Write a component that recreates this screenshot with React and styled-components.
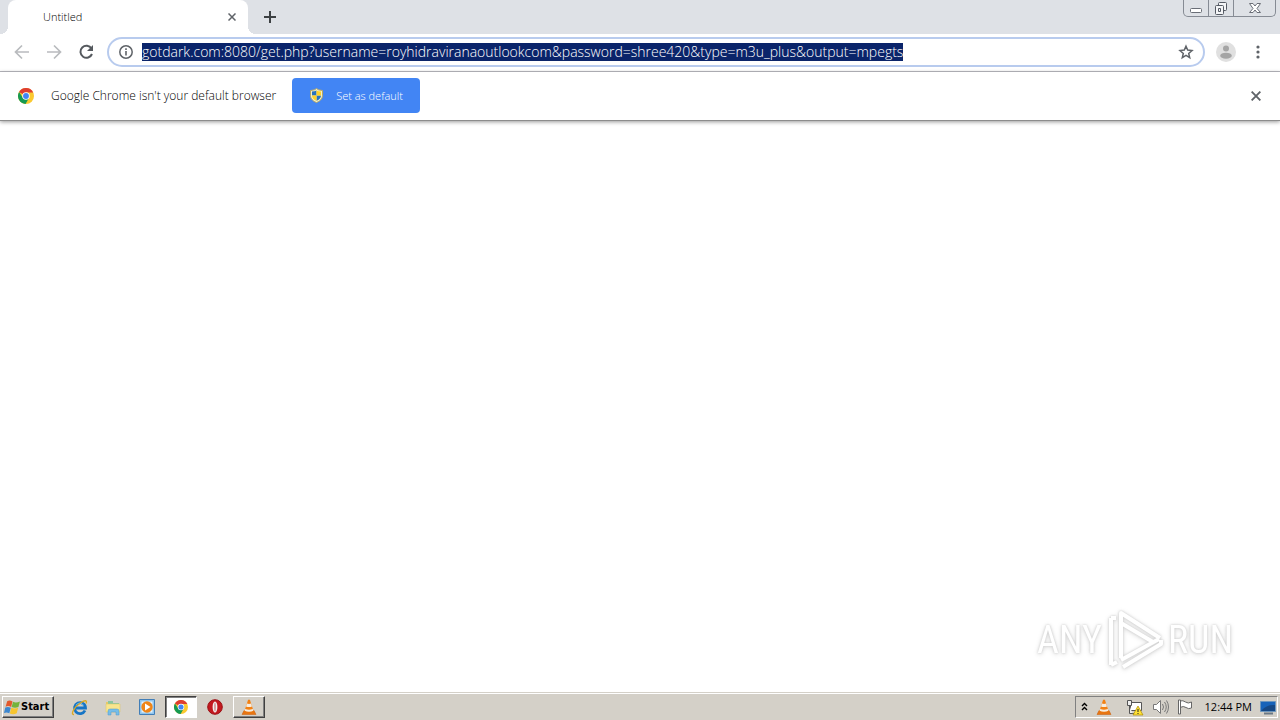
import React from "react";
import styled, { createGlobalStyle } from "styled-components";

const Global = createGlobalStyle`
  * { box-sizing: border-box; }
  body { margin: 0; font-family: "Open Sans", "Noto Sans", sans-serif; color: #222; background: #fff; }
  button { border: 0; padding: 0; background: none; font: inherit; color: inherit; }
  svg { display: block; flex: none; }
`;

const Desktop = styled.div`
  display: flex;
  flex-direction: column;
  min-height: 100vh;
`;

const TabStrip = styled.header`
  display: flex;
  align-items: flex-start;
  height: 34px;
  padding-left: 8px;
  background: #dee1e6;
`;

const Tab = styled.div`
  position: relative;
  display: flex;
  align-items: center;
  justify-content: space-between;
  width: 240px;
  height: 34px;
  padding: 0 10px 0 35px;
  border-radius: 8px 8px 0 0;
  background: #fff;
  font-size: 11px;
  line-height: 16px;
  font-weight: 300;
  color: #000;
  &::before, &::after {
    content: "";
    position: absolute;
    bottom: 0;
    width: 8px;
    height: 8px;
  }
  &::before { left: -8px; background: radial-gradient(circle at 0 0, #dee1e6 8px, #fff 8px); }
  &::after { right: -8px; background: radial-gradient(circle at 100% 0, #dee1e6 8px, #fff 8px); }
`;

const IconButton = styled.button`
  display: flex;
  align-items: center;
  justify-content: center;
  flex: none;
  width: ${(p) => p.$w || 32}px;
  height: ${(p) => p.$h || 32}px;
`;

const NewTab = styled(IconButton)`
  margin-left: 8px;
`;

const WindowControls = styled.div`
  display: flex;
  height: 17px;
  margin: 0 4px 0 auto;
  border: 1px solid #868b94;
  border-top: 0;
  border-radius: 0 0 5px 5px;
  button + button { border-left: 1px solid #868b94; }
`;

const Toolbar = styled.nav`
  display: flex;
  align-items: center;
  height: 38px;
  padding: 0 6px 2px;
  border-bottom: 1px solid #b1b1b9;
  background: #fff;
`;

const AddressBar = styled.div`
  display: flex;
  align-items: center;
  flex: 1;
  min-width: 0;
  height: 30px;
  margin: 0 5px;
  padding: 0 1px 0 10px;
  border: 2px solid #b8cbee;
  border-radius: 15px;
`;

const Address = styled.input`
  field-sizing: content;
  min-width: 0;
  height: 18px;
  margin: 0 auto 0 9px;
  padding: 0;
  border: 0;
  outline: 0;
  background: #0a246a;
  color: #fff;
  font: 300 14px/18px "Open Sans", "Noto Sans", sans-serif;
`;

const InfoBar = styled.section`
  position: relative;
  display: flex;
  align-items: center;
  height: 49px;
  padding: 0 8px 0 18px;
  border-bottom: 1px solid #8c8c8c;
  background: #fff;
  box-shadow: 0 1px 4px #999;
`;

const Message = styled.span`
  margin: 0 16px 0 17px;
  font-size: 12px;
  font-weight: 300;
  line-height: 16px;
  color: #000;
`;

const DefaultButton = styled.button`
  display: flex;
  align-items: center;
  gap: 12px;
  height: 35px;
  margin-bottom: 1px;
  padding: 0 17px;
  border-radius: 4px;
  background: #4285f4;
  color: #fff;
  font-size: 11px;
  font-weight: 300;
  line-height: 16px;
`;

const Dismiss = styled(IconButton)`
  margin-left: auto;
`;

const Page = styled.main`
  display: flex;
  flex: 1;
  align-items: flex-end;
  justify-content: flex-end;
  padding: 0 47px 22px 0;
`;

const Watermark = styled.div`
  display: flex;
  align-items: center;
  gap: 5px;
  color: #fff;
  font: 38px/60px "Roboto Condensed", "Open Sans Condensed", "Liberation Sans Narrow", sans-serif;
  filter: drop-shadow(0 0 1px #ccc) drop-shadow(0 1px 2px #ddd);
`;

const Taskbar = styled.footer`
  display: flex;
  align-items: center;
  height: 28px;
  padding: 1px 2px 0;
  border-top: 1px solid #d4d0c8;
  background: #d4d0c8;
  box-shadow: inset 0 1px #fff;
  font: 11px/16px "Open Sans", "Noto Sans", sans-serif;
  color: #000;
`;

const StartButton = styled.button`
  display: flex;
  align-items: center;
  height: 22px;
  width: 52px;
  padding-left: 1px;
  margin-right: 9px;
  border: 1px solid;
  border-color: #fff #404040 #404040 #fff;
  box-shadow: inset -1px -1px #808080;
  font: bold 11px/16px "DejaVu Sans Condensed", "Open Sans", sans-serif;
`;

const TaskButton = styled.button`
  display: flex;
  align-items: center;
  justify-content: center;
  width: 32px;
  height: 22px;
  margin-right: 2px;
  border: 1px solid transparent;
  ${(p) => p.$state === "pressed" && "background: #fff; border-color: #404040 #fff #fff #404040; box-shadow: inset 1px 1px #808080;"}
  ${(p) => p.$state === "raised" && "border-color: #fff #404040 #404040 #fff; box-shadow: inset -1px -1px #808080;"}
`;

const Tray = styled.div`
  display: flex;
  align-items: center;
  gap: 8px;
  height: 22px;
  margin-left: auto;
  padding: 0 0 0 5px;
  border: 1px solid;
  border-color: #808080 #fff #fff #808080;
`;

const Clock = styled.time`
  margin: 0 0 0 4px;
`;

const Cross = ({ size = 8 }) => (
  <svg width={size} height={size} viewBox="0 0 8 8"><path d="M.5.5l7 7M7.5.5l-7 7" stroke="#5f6368" strokeWidth="1.5" /></svg>
);

const Arrow = ({ flip }) => (
  <svg width="16" height="16" viewBox="0 0 16 16" fill="none" stroke="#b9bbbe" strokeWidth="1.700">
    <path d={flip ? "M1 8h13M8 1.5L14.5 8 8 14.5" : "M15 8H2M8 1.5L1.5 8 8 14.5"} />
  </svg>
);

const Chrome = ({ size = 18 }) => (
  <svg width={size} height={size} viewBox="0 0 18 18">
    <circle cx="9" cy="9" r="9" fill="#fbc92f" />
    <path d="M9 9L1.2 4.5A9 9 0 0 1 16.8 4.5L17 5H9z" fill="#df3e30" />
    <path d="M1.2 4.5A9 9 0 0 0 8.5 18L12.5 11 9 9 5.5 11z" fill="#159a52" />
    <circle cx="9" cy="9" r="4.2" fill="#fff" />
    <circle cx="9" cy="9" r="3.3" fill="#4285f4" />
  </svg>
);

const Shield = () => (
  <svg width="15" height="15" viewBox="0 0 15 15">
    <path d="M7.5.5l2 1.3 4 .7v5c0 3.500-2.800 5.800-6 7-3.200-1.200-6-3.500-6-7v-5l4-.7z" fill="#f3efc8" stroke="#b5a763" />
    <path d="M7.500 2.500v5H3v-4l2.500-.3zM7.500 7.500H12c0 2.500-2 4.300-4.500 5.300z" fill="#2673bf" />
    <path d="M7.500 2.500v5H12v-4l-2.500-.3zM7.500 7.500H3c0 2.500 2 4.300 4.500 5.300z" fill="#ffd229" />
  </svg>
);

const Cone = () => (
  <svg width="16" height="17" viewBox="0 0 16 17">
    <path d="M3 11.500h10l2 4H1z" fill="#e87511" stroke="#c85c0b" strokeWidth=".5" />
    <path d="M7 1q1-.8 2 0l3.500 11q-4.500 2-9 0z" fill="#f28114" />
    <path d="M6 4.500q2 .8 4 0l1 3q-3 1.200-6 0zM4.200 10q3.800 1.500 7.600 0l.6 1.800q-4.400 1.700-8.800 0z" fill="#f6ede1" />
  </svg>
);

const WindowsFlag = () => (
  <svg width="17" height="17" viewBox="0 0 16 16">
    <path d="M3 2q2.500-1.200 5 .3L6.700 7.500Q4 6 1.500 7.300z" fill="#e2592c" />
    <path d="M8.500 2.600q2.700 1.300 6.500-.3L13.600 7.500q-3 1.400-6.400.1z" fill="#74b33b" />
    <path d="M1.200 8q2.500-1.200 5.200.2L5 13.500Q2.500 12 0 13.200z" fill="#3c87cf" />
    <path d="M6.900 8.200q3.200 1.400 6.400 0L12 13.500q-3.200 1.500-6.500.2z" fill="#f6c52e" />
  </svg>
);

const Explorer = () => (
  <svg width="17" height="17" viewBox="0 0 17 17" fill="none">
    <path d="M14 11.500a5.500 5.500 0 1 1 .5-2.500H5" stroke="#1775c5" strokeWidth="2.800" />
    <path d="M12.500 6.500A4.200 4.200 0 0 0 5 6.200" stroke="#66baf0" />
    <path d="M3 15.500C-1 16 3 8 10 3.500 14 1 16.500 1 15 4.500" stroke="#dda921" strokeWidth="1.300" />
  </svg>
);

const Folder = () => (
  <svg width="17" height="17" viewBox="0 0 17 17">
    <path d="M1 3h5l1 1h7v9H1z" fill="#e6c968" />
    <path d="M3 2h5v2h6v3H3z" fill="#8bc6a0" />
    <path d="M1 5h14v8H1z" fill="#f8e58e" stroke="#ddc565" strokeWidth=".5" />
    <path d="M3 16v-4q0-2 2-2h7q2 0 2 2v4h-3v-3H6v3z" fill="#76bde8" stroke="#4f9acc" strokeWidth=".5" />
  </svg>
);

const Player = () => (
  <svg width="16" height="16" viewBox="0 0 16 16">
    <path d="M.5.5h15v15H.5z" fill="#8fc5ee" stroke="#427eb7" />
    <path d="M2.500 2.500h11v11h-11z" fill="#e5f2fc" />
    <circle cx="8" cy="8" r="5.700" fill="#ef8518" /><path d="M6 4.500L11.500 8 6 11.500z" fill="#fff" />
  </svg>
);

const Opera = () => (
  <svg width="16" height="16" viewBox="0 0 16 16">
    <circle cx="8" cy="8" r="7.300" fill="#c3191f" stroke="#9b1015" />
    <ellipse cx="8" cy="8" rx="2.400" ry="5.500" fill="#f3f0ee" /><ellipse cx="8" cy="8" rx=".7" ry="4.500" fill="#c98080" />
  </svg>
);

const Play = () => (
  <svg width="56" height="60" viewBox="0 0 56 60" fill="none" stroke="#fff" strokeWidth="4" strokeLinejoin="round">
    <path d="M4 8v47M4 8h5M4 55l6-3" />
    <path d="M14 48V3l39 25" />
    <path d="M14 13l32 19M14 50l38-21M16 57l38-23v-4" />
  </svg>
);

export default function App() {
  return (
    <Desktop>
      <Global />
      <TabStrip>
        <Tab>
          <span>Untitled</span>
          <IconButton $w={12} $h={16} aria-label="Close tab"><Cross /></IconButton>
        </Tab>
        <NewTab $w={28} $h={34} aria-label="New tab">
          <svg width="12" height="12" viewBox="0 0 12 12"><path d="M6 0v12M0 6h12" stroke="#3c4043" strokeWidth="2" /></svg>
        </NewTab>
        <WindowControls>
          <IconButton $w={24} $h={16} aria-label="Minimize">
            <svg width="12" height="16" viewBox="0 0 12 16"><rect x=".5" y="8.500" width="11" height="4" rx="1" fill="#fff" stroke="#6a6e77" /></svg>
          </IconButton>
          <IconButton $w={25} $h={16} aria-label="Restore">
            <svg width="14" height="16" viewBox="0 0 14 16" fill="#f4f5f7" stroke="#555a64">
              <rect x="4.500" y="2.500" width="8" height="8" rx="1" /><rect x="1.500" y="5.500" width="8" height="9" rx="1" /><path d="M4.500 8.500h2v3h-2z" />
            </svg>
          </IconButton>
          <IconButton $w={42} $h={16} aria-label="Close window">
            <svg width="12" height="16" viewBox="0 0 12 16" fill="#fff" stroke="#6a6e77"><path d="M.5 3.500h3.500l2 2.500 2-2.500h3.500L8 8.500l3.500 4H8L6 10l-2 2.500H.5l3.500-4z" /></svg>
          </IconButton>
        </WindowControls>
      </TabStrip>
      <Toolbar>
        <IconButton aria-label="Back"><Arrow /></IconButton>
        <IconButton aria-label="Forward"><Arrow flip /></IconButton>
        <IconButton aria-label="Reload">
          <svg width="16" height="16" viewBox="0 0 16 16" fill="none" stroke="#55595e" strokeWidth="2">
            <path d="M13.500 4.500A6 6 0 1 0 14 10" /><path d="M15 1v6H9z" fill="#55595e" stroke="none" />
          </svg>
        </IconButton>
        <AddressBar>
          <svg width="14" height="14" viewBox="0 0 14 14"><circle cx="7" cy="7" r="6.200" fill="none" stroke="#5f6368" strokeWidth="1.500" /><path d="M7 6v4.500M7 3.300V5" stroke="#5f6368" strokeWidth="1.600" /></svg>
          <Address aria-label="Address" spellCheck="false" defaultValue="gotdark.com:8080/get.php?username=royhidraviranaoutlookcom&password=shree420&type=m3u_plus&output=mpegts" />
          <IconButton aria-label="Bookmark">
            <svg width="16" height="16" viewBox="0 0 16 16" fill="none" stroke="#5f6368" strokeWidth="1.500"><path d="M8 2.200l1.700 3.900 4.300.4-3.300 2.900 1 4.200L8 11.400l-3.700 2.200 1-4.200L2 6.500l4.300-.4z" /></svg>
          </IconButton>
        </AddressBar>
        <IconButton aria-label="Profile">
          <svg width="20" height="20" viewBox="0 0 20 20"><circle cx="10" cy="10" r="10" fill="#e0e0e0" /><circle cx="10" cy="6.500" r="3" fill="#a5a5a5" /><ellipse cx="10" cy="13.700" rx="5.800" ry="3" fill="#a5a5a5" /></svg>
        </IconButton>
        <IconButton aria-label="Menu">
          <svg width="4" height="14" viewBox="0 0 4 14" fill="#5f6368"><circle cx="2" cy="2" r="1.600" /><circle cx="2" cy="7" r="1.600" /><circle cx="2" cy="12" r="1.600" /></svg>
        </IconButton>
      </Toolbar>
      <InfoBar>
        <Chrome size={16} />
        <Message>Google Chrome isn't your default browser</Message>
        <DefaultButton><Shield />Set as default</DefaultButton>
        <Dismiss aria-label="Dismiss"><Cross size={10} /></Dismiss>
      </InfoBar>
      <Page>
        <Watermark><span>ANY</span><Play /><span>RUN</span></Watermark>
      </Page>
      <Taskbar>
        <StartButton><WindowsFlag />Start</StartButton>
        <TaskButton aria-label="Internet Explorer"><Explorer /></TaskButton>
        <TaskButton aria-label="File Explorer"><Folder /></TaskButton>
        <TaskButton aria-label="Media Player"><Player /></TaskButton>
        <TaskButton $state="pressed" aria-label="Chrome"><Chrome size={14} /></TaskButton>
        <TaskButton aria-label="Opera"><Opera /></TaskButton>
        <TaskButton $state="raised" aria-label="VLC"><Cone /></TaskButton>
        <Tray>
          <svg width="7" height="10" viewBox="0 0 7 10" fill="none" stroke="#000" strokeWidth="1.400"><path d="M1 4l2.500-2.500L6 4M1 8l2.500-2.500L6 8" /></svg>
          <Cone />
          <svg width="24" height="17" viewBox="0 0 24 17">
            <path d="M10.500 3.500h11v8h-11z" fill="#fff" stroke="#555" /><path d="M10 14.500h9" stroke="#555" />
            <path d="M7.500 1.500h4v5h-4zM9.500 6.500v8h3" fill="#eee" stroke="#555" />
            <path d="M18 7l5 9H13z" fill="#ffe135" stroke="#ac8b00" strokeWidth=".7" /><path d="M18 10v3M18 14v1" stroke="#222" />
          </svg>
          <svg width="17" height="16" viewBox="0 0 17 16" fill="#fff" stroke="#777"><path d="M1.500 5.500h3l4-4v13l-4-4h-3z" /><path d="M10.500 5q2 3 0 6M12.500 3q3.500 5 0 10M14.500 1.500q4 6.500 0 13" fill="none" /></svg>
          <svg width="16" height="16" viewBox="0 0 16 16" fill="#fff" stroke="#666"><path d="M3 2q3-1 5.500 1T14.500 3v6q-3 1.500-5.500-.5T3 8.500z" /><path d="M1.500 1v14h2V1z" /></svg>
          <Clock>12:44 PM</Clock>
          <svg width="17" height="15" viewBox="0 0 17 15"><path d="M.5 1.500h15v10H.5z" fill="#1763b9" stroke="#6d96bd" /><path d="M1 11Q7 4 15 5v6z" fill="#164884" /><path d="M4 13.500h9" stroke="#6a7885" strokeWidth="2" /></svg>
        </Tray>
      </Taskbar>
    </Desktop>
  );
}
